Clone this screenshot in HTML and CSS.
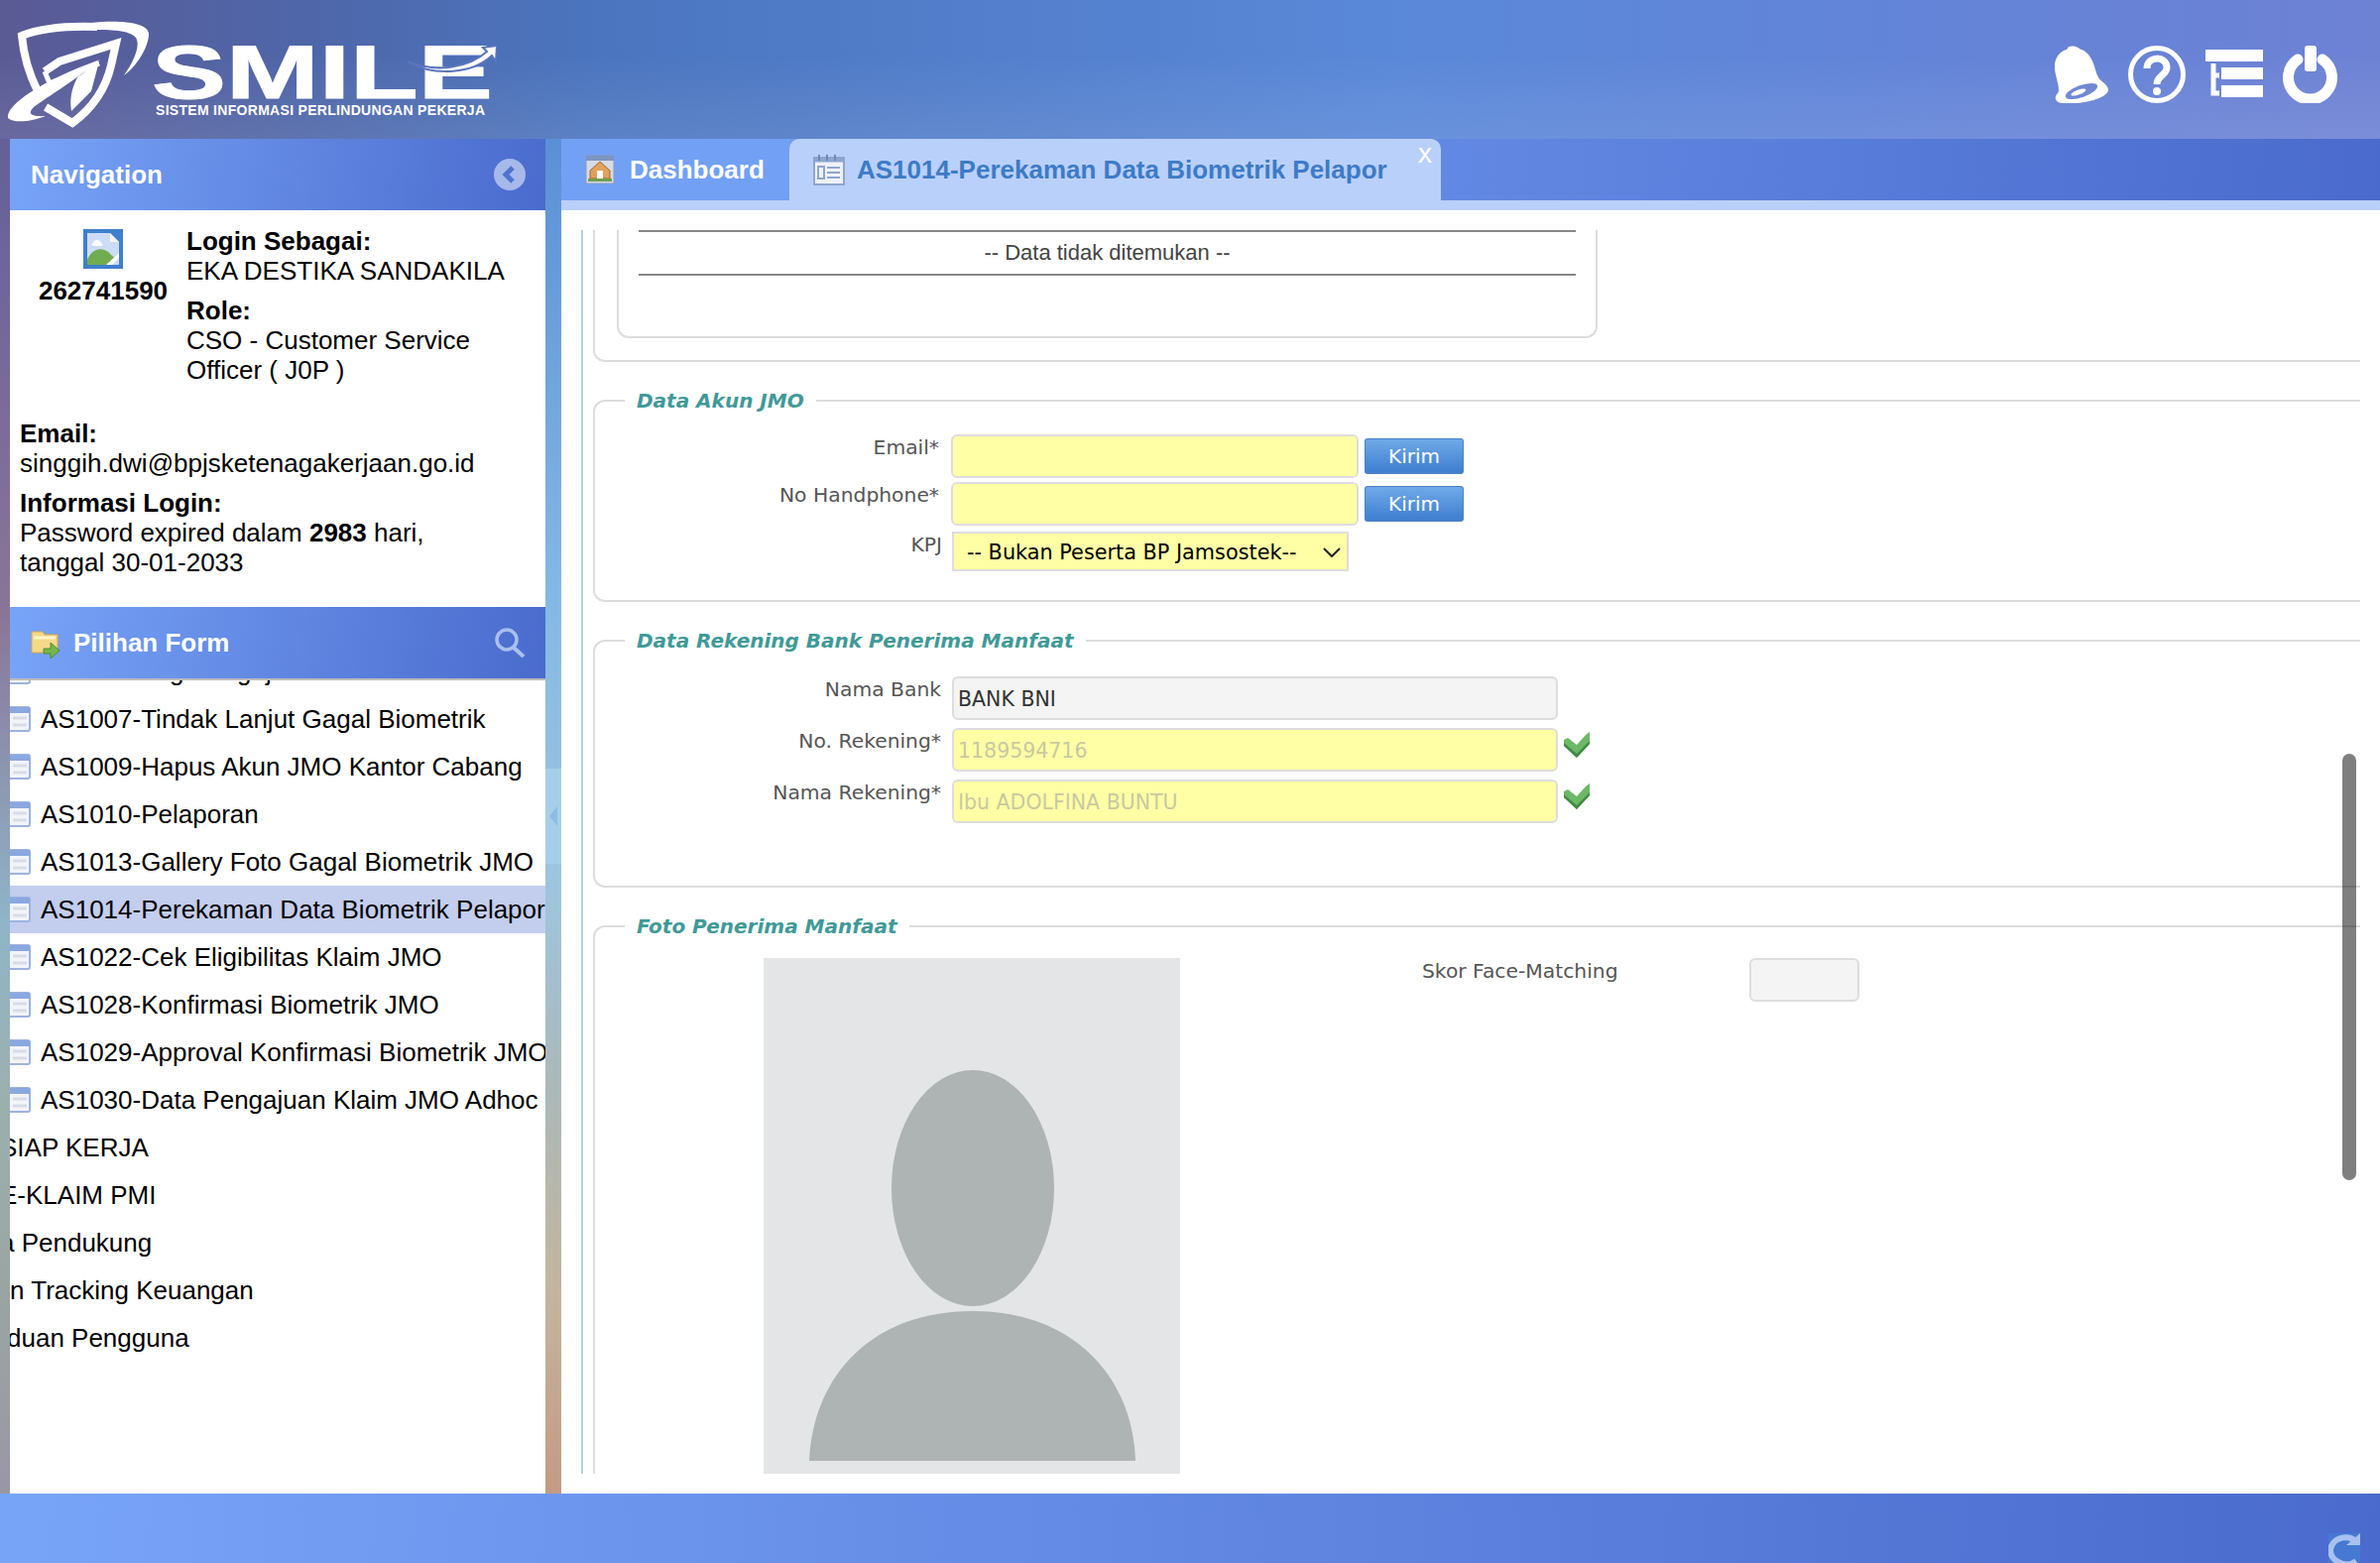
FILE: index.html
```html
<!DOCTYPE html>
<html lang="en">
<head>
  <meta charset="UTF-8" />
  <title>SMILE - Sistem Informasi Perlindungan Pekerja</title>
  <link rel="stylesheet" href="styles.css">
</head>
<body>
  <header class="topbar">
    <div class="logo">
      <svg class="logo-mark" viewBox="0 0 150 130" width="150" height="130">
        <path class="logo-line" d="M98 27C70 26 42 28 22 36C24 58 30 76 38 92M46 108L73 124C92 110 106 92 112 66L117 44L60 62L45 72" />
        <path class="logo-line thin" d="M45 72L50 84L100 64" />
        <path class="logo-fill" d="M92 23C120 20 152 22 150 36C148 52 136 68 125 76C135 62 142 46 137 38C130 30 112 30 92 30Z" />
        <path class="logo-fill" d="M8 119C6 106 40 82 101 60C72 84 50 96 34 108C28 114 30 118 46 117C34 122 14 125 8 119Z" />
        <path class="logo-fill" d="M100 62L92 92L72 112C70 100 72 90 78 78Z" />
      </svg>
      <div class="logo-text">
        <span class="logo-name">SMILE</span>
        <svg class="logo-smile" viewBox="0 0 90 30" width="90" height="30">
          <path d="M0 18C30 30 62 24 80 8L76 4L90 2L89 18L85 12C66 30 28 34 0 18Z" />
        </svg>
        <span class="logo-sub">SISTEM INFORMASI PERLINDUNGAN PEKERJA</span>
      </div>
    </div>
    <nav class="top-icons">
      <svg viewBox="0 0 54 58" width="54" height="58">
        <path class="white" d="M14 1C22 -1 24 3 27 4C38 8 40 22 43 30C45 36 53 38 54 44C55 52 30 60 8 58C0 57 -1 52 3 48C6 44 1 32 0 24C-1 14 4 6 12 4Z" />
        <ellipse class="hole" cx="27" cy="46" rx="17" ry="6" transform="rotate(-20 27 46)" />
        <ellipse class="white" cx="24" cy="47" rx="8" ry="2.5" transform="rotate(-20 24 47)" />
      </svg>
      <svg viewBox="0 0 58 58" width="58" height="58">
        <circle class="ring" cx="29" cy="29" r="26.5" />
        <path class="ring thick" d="M19 23C19 10 39 10 39 22C39 30 29 30 29 39" />
        <circle class="white" cx="29" cy="46" r="4" />
      </svg>
      <svg viewBox="0 0 58 58" width="58" height="58">
        <path class="white" d="M0 4H58V16H0ZM16 22H58V34H16ZM16 40H58V52H16Z" />
        <path class="ring" d="M8 18V48H14M8 30H14" />
      </svg>
      <svg viewBox="0 0 56 58" width="56" height="58">
        <path class="ring power" d="M15 14A22 22 0 1 0 40 14" />
        <rect class="white" x="22" y="0" width="12" height="26" rx="3" />
      </svg>
    </nav>
  </header>

  <div class="workspace">
    <div class="gutter"></div>

    <aside class="sidebar">
      <div class="panel-head">
        <span class="panel-title">Navigation</span>
        <svg class="collapse-icon" viewBox="0 0 32 32" width="32" height="32">
          <circle cx="16" cy="16" r="16" fill="#a7b9ea" />
          <path d="M19 9L12 16L19 23" fill="none" stroke="#4f74cf" stroke-width="5" />
        </svg>
      </div>

      <div class="user-info">
        <div class="user-top">
          <div class="user-id">
            <svg class="avatar" viewBox="0 0 40 40" width="40" height="40">
              <rect width="40" height="40" fill="#3f7fcc" />
              <path d="M4 4H27L36 13V36H4Z" fill="#cddcf6" />
              <path d="M27 4L36 13H27Z" fill="#f4f4f4" />
              <path d="M10 14C10 10 17 10 18 14C20 14 20 17 18 17H10C8 17 8 14 10 14Z" fill="#fff" />
              <path d="M4 36V31C8 20 20 16 28 26L33 30L24 36Z" fill="#72ac50" />
              <path d="M23 36L36 24V29L29 36Z" fill="#fff" />
            </svg>
            <b>262741590</b>
          </div>
          <div class="user-role">
            <p><b>Login Sebagai:</b><br>EKA DESTIKA SANDAKILA</p>
            <p><b>Role:</b><br>CSO - Customer Service<br>Officer ( J0P )</p>
          </div>
        </div>
        <p><b>Email:</b><br>singgih.dwi@bpjsketenagakerjaan.go.id</p>
        <p><b>Informasi Login:</b><br>Password expired dalam <b>2983</b> hari,<br>tanggal 30-01-2033</p>
      </div>

      <div class="panel-head form-head">
        <svg class="folder-icon" viewBox="0 0 30 28" width="30" height="28">
          <path d="M1 1H12L14 4H27V22H1Z" fill="#f5d98a" stroke="#d9a94c" />
          <path d="M3 7H25" stroke="#fff3c8" stroke-width="3" />
          <path d="M13 18H20V12L29 20L20 28V23H13Z" fill="#75b64c" stroke="#4e8f33" />
        </svg>
        <span class="panel-title">Pilihan Form</span>
        <svg class="search-icon" viewBox="0 0 32 30" width="32" height="30">
          <circle cx="13" cy="12" r="10" fill="none" stroke="#a9c0ef" stroke-width="3.5" />
          <path d="M20 20L30 29" stroke="#a9c0ef" stroke-width="4" />
        </svg>
      </div>

      <div class="tree">
        <ul class="tree-inner">
          <li><svg class="form-icon"><use href="#form-icon" /></svg>AS1006-Log Pengajuan Klaim</li>
          <li><svg class="form-icon"><use href="#form-icon" /></svg>AS1007-Tindak Lanjut Gagal Biometrik</li>
          <li><svg class="form-icon"><use href="#form-icon" /></svg>AS1009-Hapus Akun JMO Kantor Cabang</li>
          <li><svg class="form-icon"><use href="#form-icon" /></svg>AS1010-Pelaporan</li>
          <li><svg class="form-icon"><use href="#form-icon" /></svg>AS1013-Gallery Foto Gagal Biometrik JMO</li>
          <li class="active"><svg class="form-icon"><use href="#form-icon" /></svg>AS1014-Perekaman Data Biometrik Pelapor</li>
          <li><svg class="form-icon"><use href="#form-icon" /></svg>AS1022-Cek Eligibilitas Klaim JMO</li>
          <li><svg class="form-icon"><use href="#form-icon" /></svg>AS1028-Konfirmasi Biometrik JMO</li>
          <li><svg class="form-icon"><use href="#form-icon" /></svg>AS1029-Approval Konfirmasi Biometrik JMO</li>
          <li><svg class="form-icon"><use href="#form-icon" /></svg>AS1030-Data Pengajuan Klaim JMO Adhoc</li>
          <li class="group">SIAP KERJA</li>
          <li class="group">E-KLAIM PMI</li>
          <li class="group">a Pendukung</li>
          <li class="group shift-small">n Tracking Keuangan</li>
          <li class="group shift-big">duan Pengguna</li>
        </ul>
      </div>
    </aside>

    <div class="splitter">
      <div class="split-handle">
        <svg viewBox="0 0 8 20" width="8" height="20"><path d="M8 0V20L0 10Z" fill="#8ebbe2" /></svg>
      </div>
    </div>

    <main class="main">
      <div class="tabs">
        <div class="tab tab-home">
          <svg viewBox="0 0 30 30" width="30" height="30">
            <rect x="1" y="1" width="28" height="28" fill="#d6dbe6" stroke="#8c9bb8" />
            <rect x="1" y="1" width="28" height="5" fill="#7e94c0" />
            <path d="M15 7L25 16V24H5V16Z" fill="#e0a25c" stroke="#a5642c" />
            <rect x="12" y="16" width="6" height="8" fill="#fff" />
            <rect x="3" y="24" width="24" height="3" fill="#6fa052" />
          </svg>
          Dashboard
        </div>
        <div class="tab tab-active">
          <svg viewBox="0 0 32 32" width="32" height="32">
            <rect x="1" y="4" width="30" height="27" fill="#eef2f8" stroke="#8ea6cf" stroke-width="2" />
            <path d="M2 6H30" stroke="#8ea6cf" stroke-width="5" />
            <path d="M6 1V7M14 1V7M22 1V7" stroke="#6f88b8" stroke-width="2" />
            <path d="M5 13H11V25H5ZM14 14H27M14 19H27M14 24H27" fill="none" stroke="#8ea6cf" stroke-width="2" />
          </svg>
          AS1014-Perekaman Data Biometrik Pelapor
          <span class="tab-close">x</span>
        </div>
      </div>

      <div class="content">
        <div class="scroll-area">
          <div class="scrollbar-thumb"></div>

          <div class="group-box group-cut">
            <div class="inner-box">
              <div class="empty-row">-- Data tidak ditemukan --</div>
            </div>
          </div>

          <fieldset class="group-box">
            <legend>Data Akun JMO</legend>
            <div class="row">
              <label>Email*</label>
              <input class="field field-short req" type="text">
              <button class="btn" type="button">Kirim</button>
            </div>
            <div class="row">
              <label>No Handphone*</label>
              <input class="field field-short req" type="text">
              <button class="btn" type="button">Kirim</button>
            </div>
            <div class="row row-select">
              <label>KPJ</label>
              <div class="select-wrap">
                <select class="select">
                  <option>-- Bukan Peserta BP Jamsostek--</option>
                </select>
                <svg class="select-arrow" viewBox="0 0 18 10" width="18" height="10"><path d="M1 1L9 9L17 1" fill="none" stroke="#222" stroke-width="2" /></svg>
              </div>
            </div>
          </fieldset>

          <fieldset class="group-box group-bank">
            <legend>Data Rekening Bank Penerima Manfaat</legend>
            <div class="row row-bank">
              <label>Nama Bank</label>
              <input class="field field-long ro" type="text" value="BANK BNI" readonly>
            </div>
            <div class="row row-bank">
              <label>No. Rekening*</label>
              <input class="field field-long req muted" type="text" value="1189594716" readonly>
              <svg class="check"><use href="#check-icon" /></svg>
            </div>
            <div class="row row-bank">
              <label>Nama Rekening*</label>
              <input class="field field-long req muted" type="text" value="Ibu ADOLFINA BUNTU" readonly>
              <svg class="check"><use href="#check-icon" /></svg>
            </div>
          </fieldset>

          <fieldset class="group-box group-photo">
            <legend>Foto Penerima Manfaat</legend>
            <div class="photo-row">
              <svg class="photo" viewBox="0 0 420 520" width="420" height="520">
                <rect width="420" height="520" fill="#e3e5e7" />
                <ellipse cx="211" cy="232" rx="82" ry="119" fill="#aeb3b4" />
                <path d="M46 507C50 420 110 356 211 356C310 356 372 420 375 507Z" fill="#aeb3b4" />
              </svg>
              <span class="skor-label">Skor Face-Matching</span>
              <input class="field field-skor ro" type="text" readonly>
            </div>
          </fieldset>
        </div>
      </div>
    </main>
  </div>

  <footer class="footer">
    <svg viewBox="0 0 32 32" width="32" height="32">
      <rect width="32" height="32" fill="#4579d2" />
      <path d="M29 9C21 1 5 3 2 16C1 28 18 36 28 28" fill="none" stroke="#a9c1ef" stroke-width="6" />
      <path d="M18 12H32V0Z" fill="#a9c1ef" />
    </svg>
  </footer>

  <svg class="defs" width="0" height="0">
    <symbol id="form-icon" viewBox="0 0 30 26">
      <rect x="1" y="1" width="28" height="24" rx="2" fill="#f2f4f8" stroke="#9db3de" stroke-width="2" />
      <rect x="1" y="1" width="28" height="6" fill="#8aa8e0" />
      <path d="M12 12H26M12 19H26" stroke="#d8dce6" stroke-width="3" />
      <path d="M4 12H9M4 19H9" stroke="#dfe2ea" stroke-width="3" />
    </symbol>
    <symbol id="check-icon" viewBox="0 0 26 26">
      <path d="M0 8L4 6L13 13L22 3L26 0V12L13 26L0 14Z" fill="#6cb868" />
      <path d="M0 14V11L13 22L26 9V12L13 26Z" fill="#3f8a43" />
    </symbol>
  </svg>
</body>
</html>
```

FILE: styles.css
```css
* {
  box-sizing: border-box;
}

html, body {
  margin: 0;
  height: 100%;
}

body {
  display: flex;
  flex-direction: column;
  height: 1576px;
  overflow: hidden;
  font-family: "Liberation Sans", Arial, sans-serif;
  font-size: 26px;
  line-height: 30px;
  color: #000;
  background: #fff;
}

/* header */
.topbar {
  height: 140px;
  flex: none;
  display: flex;
  justify-content: space-between;
  background:
    linear-gradient(180deg, rgba(255,255,255,0) 40%, rgba(255,255,255,0.09) 100%),
    linear-gradient(90deg, #5b5a95 0, #4f66a8 300px, #4b75bf 600px, #5a88d8 1400px, #6284d8 1900px, #6e82d4 2400px);
}

.logo {
  display: flex;
}

.logo-mark {
  flex: none;
}

.logo-line {
  fill: none;
  stroke: #fff;
  stroke-width: 8;
}

.logo-line.thin {
  stroke-width: 5;
}

.logo-fill {
  fill: #fff;
}

.logo-text {
  position: relative;
  width: 345px;
  margin-left: 3px;
  padding-top: 44px;
  color: #fff;
}

.logo-name {
  display: block;
  font-size: 76px;
  line-height: 58px;
  font-weight: bold;
  transform: scaleX(1.48);
  transform-origin: left;
  white-space: nowrap;
  -webkit-text-stroke: 1px #fff;
}

.logo-smile {
  position: absolute;
  left: 258px;
  top: 44px;
  fill: #fff;
  stroke: #5a74bb;
  stroke-width: 2;
}

.logo-sub {
  display: block;
  margin: 1px 0 0 4px;
  font-size: 14px;
  line-height: 16px;
  font-weight: bold;
  letter-spacing: 0.3px;
  white-space: nowrap;
}

.top-icons {
  display: flex;
  gap: 20px;
  padding: 46px 42px 0 0;
}

.top-icons svg {
  flex: none;
}

.white {
  fill: #fff;
}

.hole {
  fill: #7088d4;
}

.ring {
  fill: none;
  stroke: #fff;
  stroke-width: 5;
}

.ring.thick {
  stroke-width: 7;
}

.ring.power {
  stroke-width: 11;
  stroke-linecap: round;
}

/* layout */
.workspace {
  flex: 1;
  display: flex;
  min-height: 0;
}

.gutter {
  width: 10px;
  flex: none;
  background: linear-gradient(180deg, #63609a 0, #7a6a9b 260px, #8a7599 480px, #8fb5c8 790px, #9cb0b0 960px, #9aa5a3 1160px, #9a97a5 1366px);
}

.sidebar {
  width: 540px;
  flex: none;
  display: flex;
  flex-direction: column;
  background: #fff;
}

.splitter {
  width: 16px;
  flex: none;
  background: linear-gradient(180deg, #5a8fd6 0, #84b8e4 460px, #9ec5dd 760px, #abb8b8 960px, #c3b59e 1160px, #c49a82 1366px);
}

.split-handle {
  display: flex;
  align-items: center;
  justify-content: center;
  height: 96px;
  margin-top: 635px;
  background: #a5cfe9;
}

.panel-head {
  height: 72px;
  flex: none;
  display: flex;
  align-items: center;
  padding: 0 20px 0 21px;
  background: linear-gradient(100deg, #78a4f8 0, #4a6bcd 100%);
}

.panel-title {
  font-weight: bold;
  color: #fff;
}

.collapse-icon,
.search-icon {
  margin-left: auto;
}

.form-head {
  gap: 13px;
}

.folder-icon {
  margin-top: 4px;
}

/* user info */
.user-info {
  height: 400px;
  flex: none;
  padding: 16px 10px 0;
}

.user-info p {
  margin: 0 0 10px;
}

.user-top {
  display: flex;
  margin-bottom: 24px;
}

.user-id {
  width: 168px;
  flex: none;
  display: flex;
  flex-direction: column;
  align-items: center;
}

.avatar {
  margin: 3px 0 7px;
}

/* form tree */
.tree {
  flex: 1;
  min-height: 0;
  overflow: hidden;
  border-top: 2px solid #bbb;
}

.tree-inner {
  list-style: none;
  margin: -33px 0 0;
  padding: 0;
}

.tree-inner li {
  display: flex;
  align-items: center;
  height: 48px;
  white-space: nowrap;
}

.tree-inner li.active {
  background: #c3cdee;
}

.form-icon {
  width: 30px;
  height: 26px;
  flex: none;
  margin: 0 10px 0 -9px;
}

.tree-inner li.group {
  margin-left: -10px;
}

.tree-inner li.shift-small {
  margin-left: 0;
}

.tree-inner li.shift-big {
  margin-left: -3px;
}

/* main */
.main {
  flex: 1;
  min-width: 0;
  display: flex;
  flex-direction: column;
  background: #fff;
}

.tabs {
  height: 72px;
  flex: none;
  display: flex;
  padding-bottom: 10px;
  background:
    linear-gradient(0deg, #b9d0fa 10px, transparent 10px),
    linear-gradient(95deg, #78a4f8 0, #4a6bcd 100%);
}

.tab {
  position: relative;
  display: flex;
  align-items: center;
  font-weight: bold;
  white-space: nowrap;
}

.tab-home {
  width: 230px;
  gap: 15px;
  padding-left: 24px;
  color: #fff;
  background: #72a0f5;
}

.tab-active {
  width: 657px;
  gap: 12px;
  padding-left: 24px;
  color: #3d7bc6;
  background: #b9d0fa;
  border-radius: 10px 10px 0 0;
}

.tab-close {
  position: absolute;
  right: 9px;
  top: 0;
  font-size: 28px;
  line-height: 30px;
  font-weight: normal;
  color: #fff;
}

.content {
  flex: 1;
  min-height: 0;
  padding: 20px 0;
  background: #fff;
}

.scroll-area {
  position: relative;
  height: 1254px;
  margin-left: 20px;
  padding: 0 20px 0 10px;
  overflow: hidden;
  border-left: 2px solid #b5d0ea;
}

.scrollbar-thumb {
  position: absolute;
  right: 24px;
  top: 528px;
  width: 14px;
  height: 430px;
  border-radius: 7px;
  background: rgba(0,0,0,0.5);
}

/* form groups */
.group-box {
  margin: 27px 0 0;
  padding: 22px 0 29px;
  min-width: 0;
  border: 2px solid #ddd;
  border-right: 0;
  border-radius: 12px 0 0 12px;
  font-family: "DejaVu Sans", Verdana, sans-serif;
  font-size: 20.3px;
  line-height: 26px;
  color: #555;
}

.group-box legend {
  margin-left: 30px;
  padding: 0 12px;
  font-size: 20px;
  line-height: 24px;
  font-weight: bold;
  font-style: italic;
  color: #3f9a97;
}

.group-cut {
  height: 133px;
  margin: 0;
  padding: 0;
  border-top: 0;
  border-radius: 0 0 0 12px;
}

.inner-box {
  width: 989px;
  height: 109px;
  margin-left: 22px;
  padding: 0 20px;
  border: 2px solid #ddd;
  border-top: 0;
  border-radius: 0 0 12px 12px;
}

.empty-row {
  height: 46px;
  border-top: 2px solid #888;
  border-bottom: 2px solid #888;
  font-family: "Liberation Sans", Arial, sans-serif;
  font-size: 22px;
  line-height: 41px;
  text-align: center;
  color: #444;
}

.row {
  display: flex;
  align-items: flex-start;
  gap: 12px;
  margin-bottom: 4px;
}

.row label {
  width: 347px;
  flex: none;
  text-align: right;
}

.row-select {
  gap: 10px;
  margin: 6px 0 0;
}

.row-select label {
  width: 350px;
}

.row-bank {
  gap: 11px;
  margin-bottom: 8px;
}

.row-bank label {
  width: 349px;
}

.field {
  height: 44px;
  padding: 2px 4px 0;
  border: 2px solid #ddd;
  border-radius: 6px;
  outline: none;
  font-family: "DejaVu Sans", Verdana, sans-serif;
  font-size: 20.5px;
  color: #333;
}

.field-short {
  width: 411px;
}

.field-long {
  width: 611px;
}

.field-skor {
  width: 111px;
}

.req {
  background: #ffffa6;
}

.ro {
  background: #f4f4f4;
}

.muted {
  color: #c9c9a2;
}

.btn {
  width: 100px;
  height: 36px;
  margin: 4px 0 0 -6px;
  padding: 0;
  border: 1px solid #4a80c8;
  border-bottom-width: 2px;
  border-radius: 3px;
  background: linear-gradient(180deg, #6faae8, #3f7ed0);
  font-family: "DejaVu Sans", Verdana, sans-serif;
  font-size: 20px;
  color: #fff;
}

.select-wrap {
  position: relative;
  width: 400px;
  height: 40px;
}

.select {
  width: 100%;
  height: 100%;
  padding: 2px 0 0 13px;
  appearance: none;
  border: 2px solid #ddd;
  border-radius: 0;
  outline: none;
  background: #ffffa6;
  font-family: "DejaVu Sans", Verdana, sans-serif;
  font-size: 20.8px;
  color: #000;
}

.select-arrow {
  position: absolute;
  right: 8px;
  top: 16px;
}

.check {
  width: 26px;
  height: 26px;
  flex: none;
  margin: 4px 0 0 -5px;
}

.group-bank {
  margin-top: 27px;
  padding: 24px 0 55px;
}

.group-photo {
  margin-top: 27px;
  padding: 20px 0 40px;
}

.photo-row {
  display: flex;
  align-items: flex-start;
  padding-left: 170px;
}

.photo {
  flex: none;
}

.skor-label {
  width: 330px;
  flex: none;
  margin-left: 244px;
}

/* footer */
.footer {
  height: 70px;
  flex: none;
  display: flex;
  justify-content: flex-end;
  padding: 40px 20px 0 0;
  overflow: hidden;
  background: linear-gradient(92deg, #78a4f8 0, #4a6bcd 100%);
}

.footer svg {
  flex: none;
}

.defs {
  position: absolute;
}
```
